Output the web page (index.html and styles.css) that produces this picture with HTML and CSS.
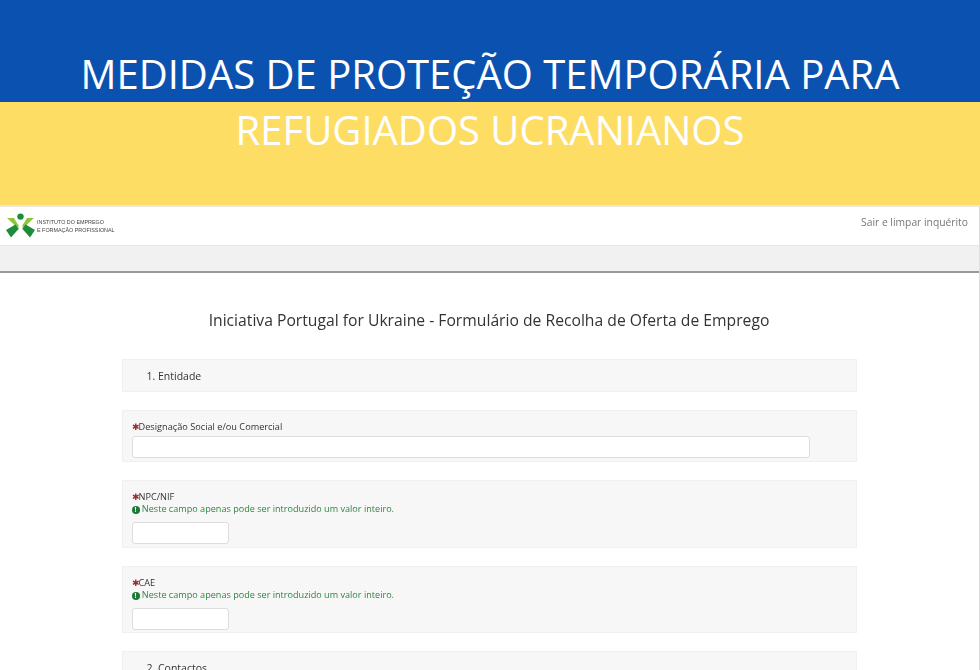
FILE: index.html
```html
<!DOCTYPE html>
<html lang="pt">
<head>
    <meta charset="UTF-8">
    <title>Medidas de proteção temporária para refugiados ucranianos</title>
    <link rel="stylesheet" href="styles.css">
</head>
<body>
    <header class="banner">
        <h1 class="bannerTitle"><span class="bannerLine">MEDIDAS DE PROTEÇÃO TEMPORÁRIA PARA</span> <span class="bannerLine">REFUGIADOS UCRANIANOS</span></h1>
    </header>

    <div class="survey">
        <div class="topBar">
            <div class="logo">
                <svg class="logoMark" viewBox="0 0 29 25" width="29" height="25">
                    <circle cx="14.5" cy="3.6" r="3.2" fill="#1e8a3c"/>
                    <path d="M1 5 L8 5 Q10 9 12.5 12 L12.5 17 Q7 10 1 5 Z" fill="#8cc63f"/>
                    <path d="M28 5 L21 5 Q19 9 16.5 12 L16.5 17 Q22 10 28 5 Z" fill="#8cc63f"/>
                    <path d="M0 17 L9.5 11.5 L12.5 16 L5 24.5 Z" fill="#1e8a3c"/>
                    <path d="M29 17 L19.5 11.5 L16.5 16 L24 24.5 Z" fill="#1e8a3c"/>
                </svg>
                <div class="logoText">INSTITUTO DO EMPREGO<br>E FORMAÇÃO PROFISSIONAL</div>
            </div>
            <a href="#" class="exitLink">Sair e limpar inquérito</a>
        </div>
        <div class="greyBar"></div>

        <main class="formArea">
            <h2 class="formTitle">Iniciativa Portugal for Ukraine - Formulário de Recolha de Oferta de Emprego</h2>

            <div class="groupTitle">1. Entidade</div>

            <div class="question">
                <label class="questionLabel"><span class="asterisk">&#10033;</span>Designação Social e/ou Comercial</label>
                <input type="text" class="inputWide">
            </div>

            <div class="question">
                <label class="questionLabel"><span class="asterisk">&#10033;</span>NPC/NIF</label>
                <p class="hint"><span class="hintIcon">!</span> Neste campo apenas pode ser introduzido um valor inteiro.</p>
                <input type="text" class="inputShort">
            </div>

            <div class="question">
                <label class="questionLabel"><span class="asterisk">&#10033;</span>CAE</label>
                <p class="hint"><span class="hintIcon">!</span> Neste campo apenas pode ser introduzido um valor inteiro.</p>
                <input type="text" class="inputShort">
            </div>

            <div class="groupTitle">2. Contactos</div>
        </main>
    </div>
</body>
</html>
```

FILE: styles.css
```css
/* General Styles */
html, body {
    height: 670px;
    overflow: hidden;
}

body {
    margin: 0;
    font-family: 'Open Sans', sans-serif;
    background: #fff;
    color: #333;
}

/* Banner */
.banner {
    height: 205px;
    background: linear-gradient(#0b52b0 0, #0b52b0 102px, #fedd64 102px, #fedd64 205px);
    padding-top: 46px;
    box-sizing: border-box;
}

.bannerTitle {
    margin: 0;
    text-align: center;
    font-size: 40px;
    font-weight: 400;
    line-height: 56px;
    color: #fff;
}

.bannerLine {
    display: block;
}

/* Survey top */
.survey {
    border-top: 2px solid #e7e7e7;
    border-right: 1px solid #ddd;
    filter: blur(0.3px);
}

.topBar {
    height: 38px;
    display: flex;
    justify-content: space-between;
    background: #fff;
}

.logo {
    display: flex;
    align-items: center;
    gap: 2px;
    padding-left: 6px;
    height: 36px;
}

.logoText {
    font-family: 'Liberation Sans', sans-serif;
    font-size: 5.4px;
    line-height: 7.5px;
    color: #444;
    padding-top: 3px;
}

.exitLink {
    font-size: 10.3px;
    line-height: 30px;
    color: #777;
    text-decoration: none;
    padding-right: 11px;
}

.greyBar {
    height: 25px;
    background: #f1f1f1;
    border-top: 1px solid #e7e7e7;
    border-bottom: 2px solid #999;
}

/* Form */
.formArea {
    width: 735px;
    margin: 0 auto;
    padding-right: 1px;
}

.formTitle {
    margin: 36px 0 28px;
    text-align: center;
    font-size: 15.7px;
    font-weight: 400;
    line-height: 22px;
    color: #333;
}

.groupTitle {
    height: 32.5px;
    box-sizing: border-box;
    margin-bottom: 18.5px;
    padding-left: 24px;
    background: #f7f7f7;
    border: 1px solid #f0f0f0;
    font-size: 10.5px;
    line-height: 33px;
}

.question {
    margin-bottom: 18px;
    padding: 9px 9px 3px;
    background: #f7f7f7;
    border: 1px solid #f0f0f0;
}

.questionLabel {
    display: block;
    font-size: 9.2px;
    line-height: 13px;
}

.asterisk {
    display: inline-block;
    width: 7px;
    color: #9b2c2c;
    font-size: 9px;
}

.hint {
    margin: 0 0 6.5px;
    font-size: 9.1px;
    line-height: 12.5px;
    color: #2e8540;
}

.hintIcon {
    display: inline-block;
    width: 8px;
    height: 8px;
    border-radius: 50%;
    background: #1c7a36;
    color: #fff;
    font-size: 7px;
    font-weight: 700;
    line-height: 8px;
    text-align: center;
}

.inputWide, .inputShort {
    display: block;
    box-sizing: border-box;
    height: 22px;
    margin-top: 3px;
    background: #fff;
    border: 1px solid #ddd;
    border-radius: 3px;
}

.inputWide {
    width: 678px;
}

.inputShort {
    width: 97px;
    margin-bottom: -0.5px;
}
```
